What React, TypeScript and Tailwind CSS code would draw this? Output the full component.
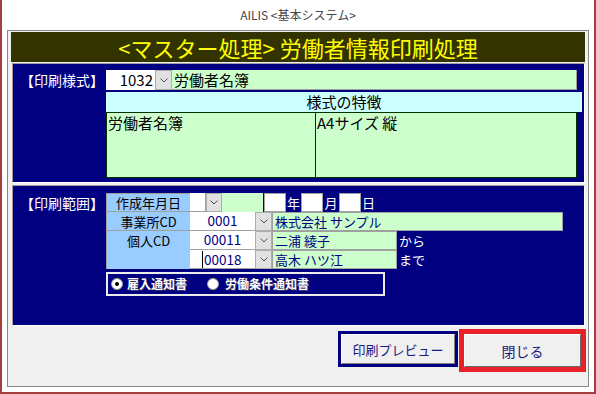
import React from "react";

function DD({ w }: { w: string }) {
  return (
    <div className={`${w} h-full shrink-0 bg-[#e1e1e1] border border-[#adadad] flex items-center justify-center`}>
      <svg width="8" height="5" viewBox="0 0 8 5">
        <path d="M0.5 0.5 L4 4 L7.5 0.5" fill="none" stroke="#505050" strokeWidth="1" />
      </svg>
    </div>
  );
}

function Radio({ checked }: { checked?: boolean }) {
  return (
    <div className="w-[12px] h-[12px] rounded-full bg-white border border-[#9a9a9a] flex items-center justify-center shrink-0">
      {checked && <div className="w-[4px] h-[4px] rounded-full bg-black" />}
    </div>
  );
}

export default function App() {
  return (
    <div className="w-[596px] h-[394px] bg-white border-x-2 border-b-2 border-[#a53e3e] font-['Noto_Sans_CJK_JP','Noto_Sans',sans-serif] overflow-hidden">
      <div className="h-[30px] flex items-center justify-center text-[12px] text-[#444] leading-none">
        AILIS &lt;基本システム&gt;
      </div>
      <div className="mx-[5px] w-[582px] h-[357px] border border-[#888] bg-[#f0f0f0] pt-[1px] px-[3px]">
        {/* title bar */}
        <div className="h-[30px] bg-[#333300] flex items-center justify-center text-[22px] text-[#ffff00] leading-none">
          &lt;マスター処理&gt; 労働者情報印刷処理
        </div>

        {/* panel 1 */}
        <div className="ml-[1px] mt-[1px] w-[573px] h-[120px] border border-t-[#a0a0a0] border-l-[#a0a0a0] border-b-white border-r-white bg-[#000080] flex pt-[6px]">
          <div className="w-[93px] pl-[7px] h-[20px] flex items-center text-white text-[14px] leading-none shrink-0">
            【印刷様式】
          </div>
          <div className="flex flex-col">
            <div className="flex h-[20px]">
              <div className="w-[49px] bg-white text-right pr-[2px] text-[15px] leading-[20px] text-black">1032</div>
              <DD w="w-[17px]" />
              <div className="w-[405px] bg-[#ccffcc] border-r border-b border-[#a0a0a0] text-[15px] leading-[19px] pl-[2px] text-black">
                労働者名簿
              </div>
            </div>
            <div className="mt-[2px] w-[476px] h-[20px] bg-[#ccffff] text-center text-[15px] leading-[20px] text-black">
              様式の特徴
            </div>
            <div className="w-[471px] h-[66px] border border-[#003300] bg-[#ccffcc] flex text-[15px] leading-[20px] text-black">
              <div className="w-[209px] border-r border-[#003300] pl-[1px]">労働者名簿</div>
              <div className="flex-1 pl-[1px]">A4サイズ 縦</div>
            </div>
          </div>
        </div>

        {/* panel 2 */}
        <div className="ml-[1px] mt-[2px] w-[573px] h-[141px] border border-t-[#a0a0a0] border-l-[#a0a0a0] border-b-white border-r-white bg-[#000080] flex pt-[7px]">
          <div className="w-[93px] pl-[7px] h-[19px] flex items-center text-white text-[14px] leading-none shrink-0">
            【印刷範囲】
          </div>
          <div className="flex flex-col">
            <div className="flex">
              <div className="w-[84px] flex flex-col bg-[#99ccff] border-l border-[#a0a0a0] text-[13px] text-black leading-none">
                <div className="h-[19px] border-t border-b border-[#a0a0a0] flex items-center justify-center">作成年月日</div>
                <div className="h-[19px] border-b border-[#a0a0a0] flex items-center justify-center">事業所CD</div>
                <div className="h-[38px] flex justify-center pt-[3px]">個人CD</div>
              </div>
              <div className="flex flex-col text-[13px] leading-none">
                <div className="flex h-[19px] items-stretch">
                  <div className="w-[16px] bg-white border-r border-b border-[#a0a0a0]" />
                  <DD w="w-[16px]" />
                  <div className="w-[41px] bg-[#ccffcc]" />
                  <div className="ml-[1px] w-[22px] bg-white border border-[#a0a0a0]" />
                  <div className="w-[15px] text-white flex items-center justify-center">年</div>
                  <div className="w-[22px] bg-white border border-[#a0a0a0]" />
                  <div className="w-[16px] text-white flex items-center justify-center">月</div>
                  <div className="w-[22px] bg-white border border-[#a0a0a0]" />
                  <div className="w-[15px] text-white flex items-center justify-center">日</div>
                </div>
                <div className="flex h-[19px] items-stretch">
                  <div className="w-[65px] bg-white border-b border-[#a0a0a0] text-[#000080] text-[13.5px] flex items-center justify-center">0001</div>
                  <DD w="w-[17px]" />
                  <div className="w-[291px] bg-[#ccffcc] border border-[#a0a0a0] text-[#000080] pl-[2px] flex items-center">株式会社 サンプル</div>
                </div>
                <div className="flex h-[19px] items-stretch">
                  <div className="w-[65px] bg-white border-b border-[#a0a0a0] text-[#000080] text-[13.5px] flex items-center justify-center">00011</div>
                  <DD w="w-[17px]" />
                  <div className="w-[125px] bg-[#ccffcc] border border-[#a0a0a0] text-[#000080] pl-[2px] flex items-center">二浦 綾子</div>
                  <div className="ml-[2px] text-white flex items-center">から</div>
                </div>
                <div className="flex h-[19px] items-stretch">
                  <div className="w-[65px] bg-white border-b border-[#a0a0a0] text-[#000080] text-[13.5px] flex items-center pl-[12px]">
                    <span className="border-l border-black pl-[1px] leading-[17px]">00018</span>
                  </div>
                  <DD w="w-[17px]" />
                  <div className="w-[125px] bg-[#ccffcc] border border-[#a0a0a0] text-[#000080] pl-[2px] flex items-center">高木 ハツ江</div>
                  <div className="ml-[2px] text-white flex items-center">まで</div>
                </div>
              </div>
            </div>
            <div className="mt-[3px] w-[279px] h-[24px] border-2 border-[#ececec] flex items-center pl-[3px] text-[12px] font-bold text-white leading-none [text-shadow:1px_1px_0_#303060]">
              <Radio checked />
              <span className="ml-[4px]">雇入通知書</span>
              <div className="ml-[20px]">
                <Radio />
              </div>
              <span className="ml-[6px]">労働条件通知書</span>
            </div>
          </div>
        </div>

        {/* buttons */}
        <div className="h-[60px] flex justify-end items-start -mr-[1px]">
          <div className="mt-[5px] mr-[1px] w-[120px] h-[36px] border-[3px] border-[#000080]">
            <div className="w-full h-full bg-[#f0f0f0] border border-t-white border-l-white border-b-[#808080] border-r-[#808080] flex items-center justify-center text-[13px] text-[#1a1a80] leading-none">
              印刷プレビュー
            </div>
          </div>
          <div className="mt-[3px] w-[127px] h-[43px] border-[5px] border-[#e8202a]">
            <div className="w-full h-full bg-[#f0f0f0] border border-t-white border-l-white border-b-[#696969] border-r-[#696969] flex items-center justify-center text-[14px] text-[#1a1a80] leading-none">
              閉じる
            </div>
          </div>
        </div>
      </div>
    </div>
  );
}
